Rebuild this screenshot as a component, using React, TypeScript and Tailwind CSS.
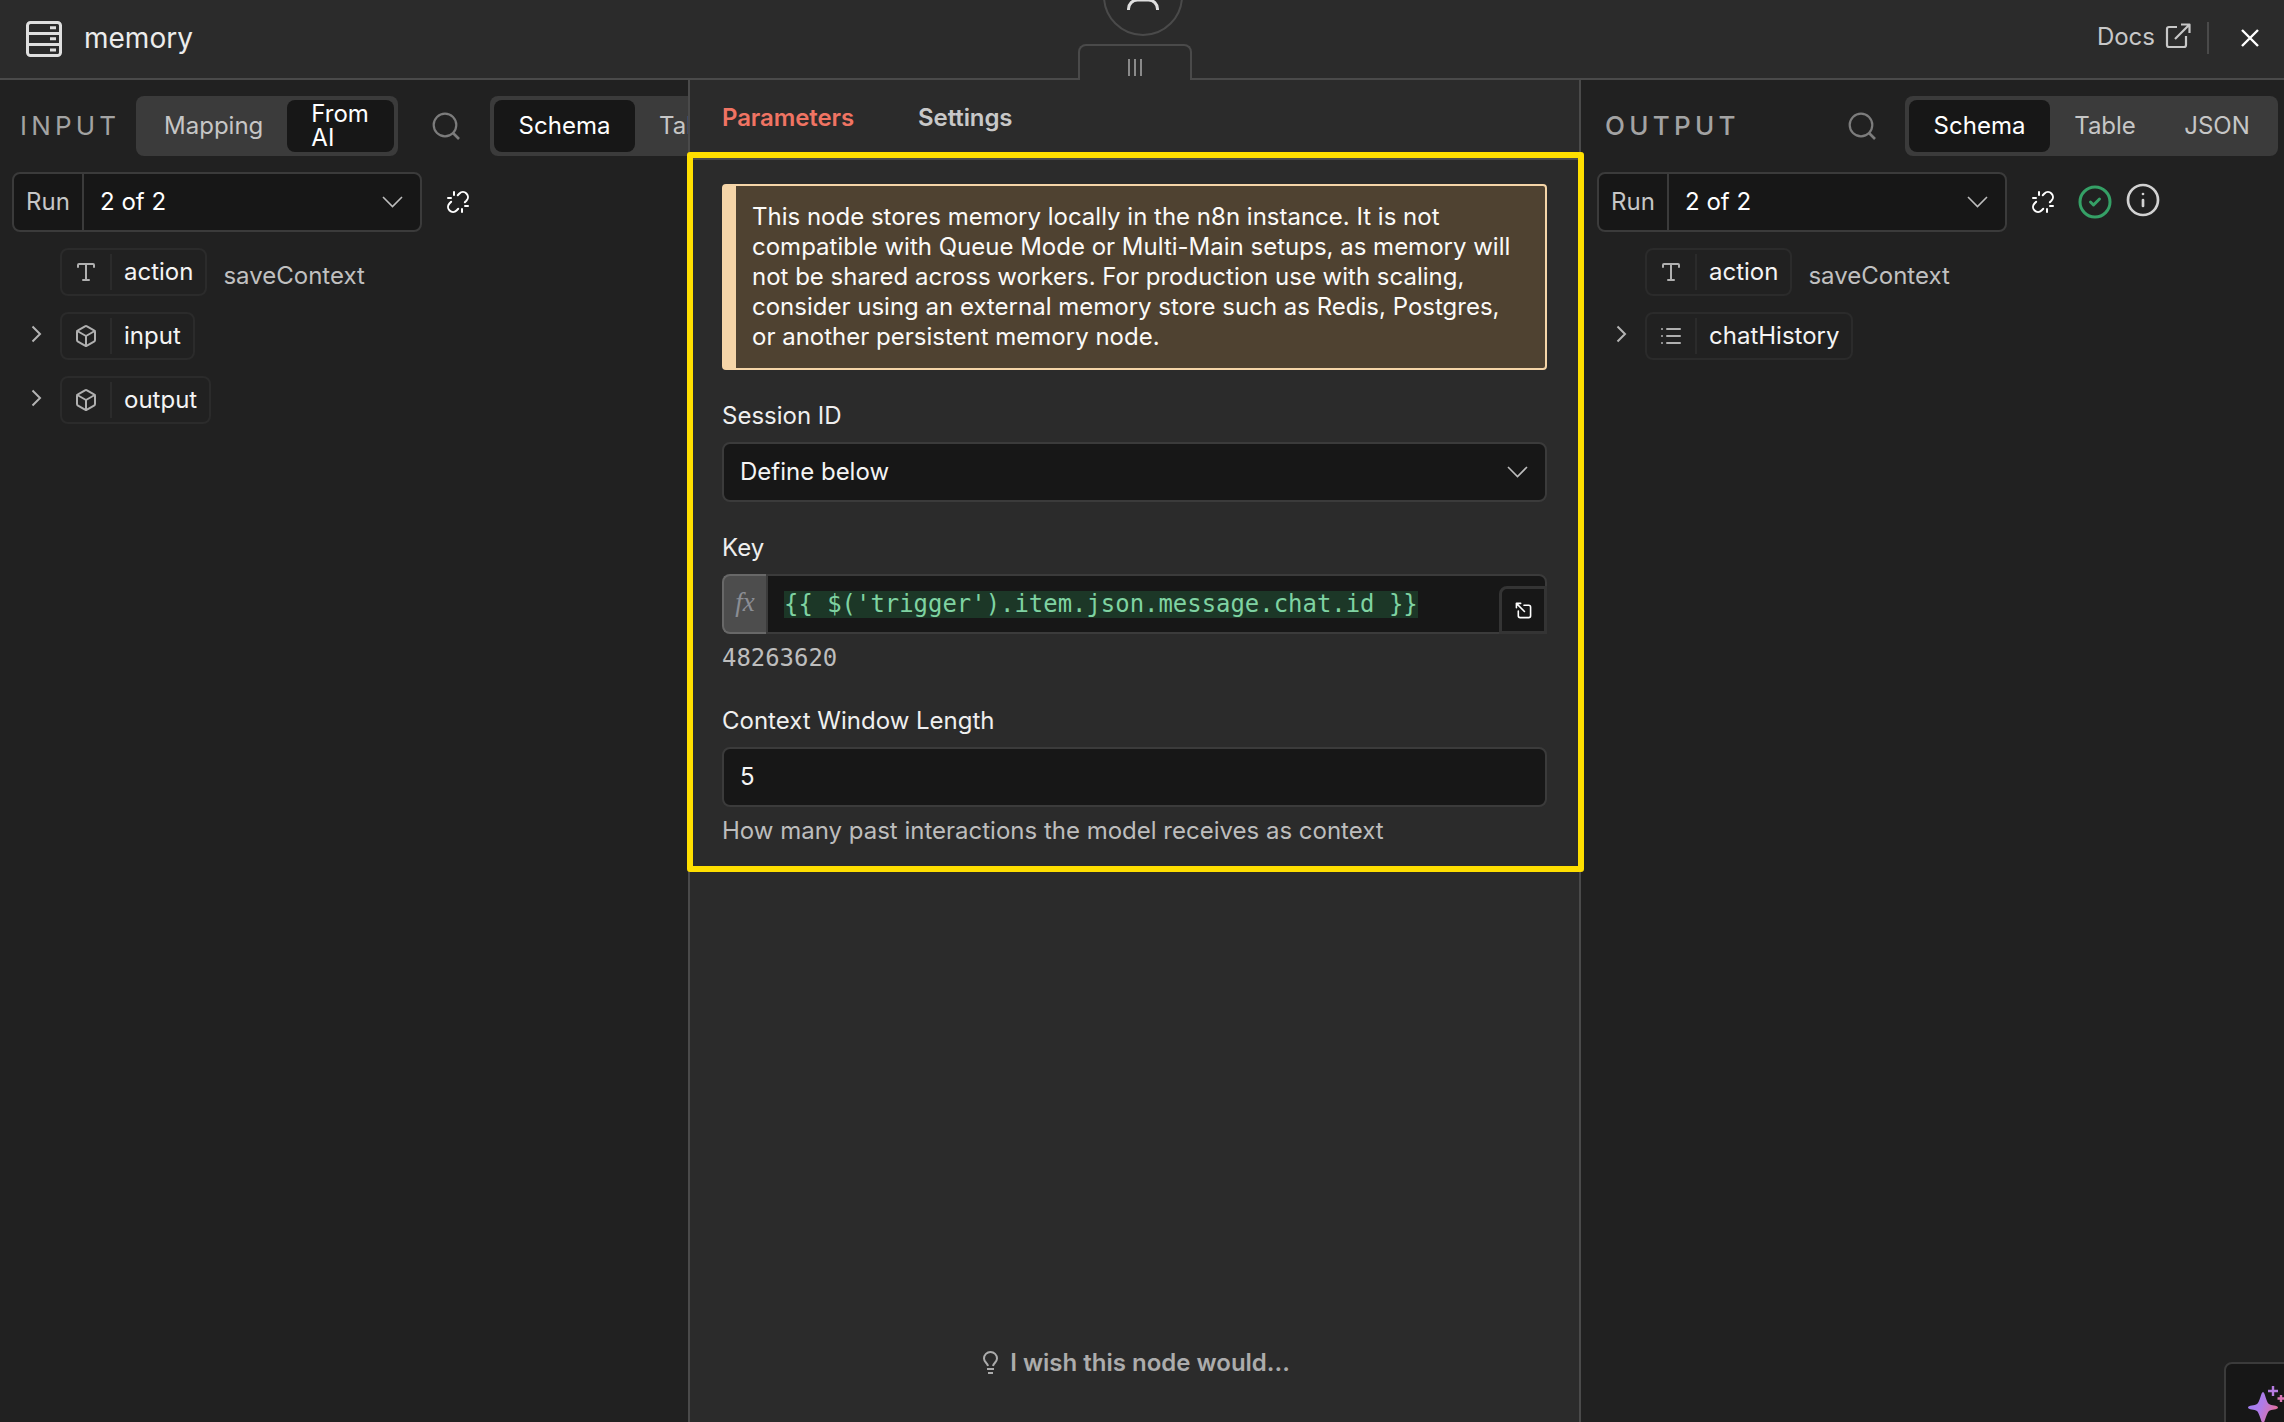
import React from "react";
import { Unlink, Box, Type, List, Info, CircleCheck } from "lucide-react";

const INTER = "font-['Inter',sans-serif]";

function ServerIcon() {
  return (
    <svg width="36" height="36" viewBox="0 0 36 36" fill="none" stroke="#dfdfdf" strokeWidth="3">
      <rect x="1.5" y="1.5" width="33" height="33" rx="3" />
      <path d="M1.5 12.5H34.5M1.5 23.5H34.5" />
      <path d="M24 6.8H30M24 17.8H30M24 29H30" />
    </svg>
  );
}

function SearchIcon() {
  return (
    <svg className="shrink-0" width="28" height="28" viewBox="0 0 28 28" fill="none" stroke="#7c7c7c" strokeWidth="2.2">
      <circle cx="13" cy="13" r="11.3" />
      <path d="M20.500 20.500L27 27" strokeWidth="2.6" />
    </svg>
  );
}

function Chevron() {
  return (
    <svg width="21" height="12" viewBox="0 0 21 12" fill="none" stroke="#bdbdbd" strokeWidth="1.6">
      <path d="M1 1L10.5 10.5L20 1" />
    </svg>
  );
}

function RunBar({ status }: { status?: boolean }) {
  return (
    <div className="flex h-[60px] items-center">
      <div className="flex h-[60px] w-[410px] items-center rounded-lg border-2 border-[#3b3b3b] bg-[#171717]">
        <div className="flex h-full w-[70px] items-center border-r-2 border-[#3b3b3b] pl-3 text-[#c6c6c6]">Run</div>
        <div className="flex-1 pl-4 text-white">2 of 2</div>
        <div className="mr-[17px]">
          <Chevron />
        </div>
      </div>
      <Unlink className="ml-6 text-white" size={24} strokeWidth={2} />
      {status && (
        <>
          <CircleCheck className="ml-[22px] text-[#35a066]" size={36} strokeWidth={2} />
          <Info className="ml-3 -mt-1 text-[#d2d2d2]" size={36} strokeWidth={1.8} />
        </>
      )}
    </div>
  );
}

function Row({ icon, name, value, expandable }: { icon: React.ReactNode; name: string; value?: string; expandable?: boolean }) {
  return (
    <div className="flex h-12 items-center">
      <div className="flex w-12 pl-[19px]">
        {expandable && (
          <svg className="-mt-1" width="11" height="18" viewBox="0 0 11 18" fill="none" stroke="#b4b4b4" strokeWidth="2">
            <path d="M1.500 1.500L9 9L1.500 16.500" />
          </svg>
        )}
      </div>
      <div className="flex h-12 items-center rounded-lg border-2 border-[#2b2b2b]">
        <div className="flex h-9 w-[50px] items-center justify-center border-r-2 border-[#2b2b2b] text-[#b0b0b0]">{icon}</div>
        <div className="px-3 text-[#f4f4f4]">{name}</div>
      </div>
      {value && <div className="ml-4 pt-2 text-[#c0c0c0]">{value}</div>}
    </div>
  );
}

function Field({ label, children, className }: { label: string; children: React.ReactNode; className: string }) {
  return (
    <div className={className}>
      <div className="h-[41px] leading-[30px] text-[#efefef]">{label}</div>
      {children}
    </div>
  );
}

export default function App() {
  return (
    <div className={`relative flex h-[1422px] w-[2284px] flex-col overflow-hidden bg-[#212121] text-[24px] leading-[30px] ${INTER}`}>
      <header className="flex h-20 shrink-0 items-center border-b-2 border-[#4a4a4a] bg-[#2b2b2b] pl-[26px] pr-[25px]">
        <ServerIcon />
        <span className="ml-[22px] pb-0.5 text-[28px] text-[#ececec]">memory</span>
        <div className="ml-auto flex items-center pb-0.5 text-[#c8c8c8]">
          <span className="pb-0.5">Docs</span>
          <svg className="ml-2.5 -mt-1" width="26" height="26" viewBox="0 0 26 26" fill="none" stroke="currentColor" strokeWidth="2.2" strokeLinejoin="round">
            <path d="M12 4H4a2 2 0 0 0-2 2V22a2 2 0 0 0 2 2H19a2 2 0 0 0 2-2V13M16 1.5H24.5V10M24.5 1.5L10 16" />
          </svg>
          <div className="ml-4 h-8 w-0.5 bg-[#4a4a4a]" />
          <svg className="ml-8" width="18" height="18" viewBox="0 0 18 18" stroke="#fff" strokeWidth="2.4">
            <path d="M1 1L17 17M17 1L1 17" />
          </svg>
        </div>
      </header>

      <main className="flex min-h-0 flex-1">
        <section className="w-[688px] overflow-hidden pl-3 pt-4">
          <div className="flex h-[60px] items-center">
            <div className="w-[124px] shrink-0 pl-2 text-[26px] tracking-[4.200px] text-[#a3a3a3]">INPUT</div>
            <div className="flex h-[60px] w-[262px] shrink-0 items-center rounded-lg bg-[#3b3b3b] p-1">
              <div className="w-[148px] text-center text-[#c6c6c6]">Mapping</div>
              <div className="flex h-[52px] w-[107px] items-center rounded-lg bg-[#171717] pl-6 leading-6 text-white">From<br />AI</div>
            </div>
            <div className="mr-[30px] ml-[34px]">
              <SearchIcon />
            </div>
            <div className="flex h-[60px] w-[373px] shrink-0 items-center rounded-lg bg-[#3b3b3b] p-1">
              <div className="flex h-[52px] w-[141px] items-center justify-center rounded-lg bg-[#171717] text-white">Schema</div>
              <div className="pl-6 text-[#c6c6c6]">Table</div>
            </div>
          </div>
          <div className="mt-4">
            <RunBar />
          </div>
          <div className="mt-4 flex flex-col gap-4">
            <Row icon={<Type size={24} strokeWidth={2} />} name="action" value="saveContext" />
            <Row icon={<Box size={24} strokeWidth={2} />} name="input" expandable />
            <Row icon={<Box size={24} strokeWidth={2} />} name="output" expandable />
          </div>
        </section>

        <section className="flex w-[893px] shrink-0 flex-col border-x-2 border-[#4a4a4a] bg-[#2b2b2b]">
          <nav className="flex h-20 shrink-0 gap-[64px] border-b-2 border-[#4a4a4a] pl-8 pt-[23px] font-semibold tracking-[-0.1px]">
            <span className="text-[#f07463]">Parameters</span>
            <span className="text-[#c8c8c8]">Settings</span>
          </nav>
          <div className="flex flex-col px-8 pt-6">
            <div className="h-[186px] rounded-[4px] border-2 border-l-[14px] border-[#f5d5a8] bg-[#4f4231] pl-4 pt-4 text-[#fbfaf8]">
              This node stores memory locally in the n8n instance. It is not<br />
              compatible with Queue Mode or Multi-Main setups, as memory will<br />
              not be shared across workers. For production use with scaling,<br />
              consider using an external memory store such as Redis, Postgres,<br />
              or another persistent memory node.
            </div>
            <Field label="Session ID" className="mt-[31px]">
              <div className="flex h-[60px] items-center justify-between rounded-lg border-2 border-[#3b3b3b] bg-[#171717] pl-4 pr-[17px] text-[#f4f4f4]">
                Define below
                <Chevron />
              </div>
            </Field>
            <Field label="Key" className="mt-[31px]">
              <div className="flex h-[60px]">
                <div className="flex w-11 items-center justify-center rounded-l-lg border-2 border-r-0 border-[#686868] bg-[#4d4d4d] pb-1 font-['Liberation_Serif',serif] text-[27px] italic text-[#8b8d94]">fx</div>
                <div className="relative flex flex-1 items-center rounded-tr-lg border-2 border-[#3b3b3b] bg-[#171717] pl-4">
                  <span className="bg-[#1c3727] font-['DejaVu_Sans_Mono',monospace] text-[23.93px] leading-[27px] whitespace-pre text-[#7fd3a2]">{"{{ $('trigger').item.json.message.chat.id }}"}</span>
                  <div className="absolute -right-0.5 -bottom-0.5 flex h-12 w-12 items-center justify-center rounded-tl-lg border-[3px] border-[#343434] bg-[#171717]">
                    <svg width="17" height="17" viewBox="0 0 18 18" fill="none" stroke="#fff" strokeWidth="1.7" strokeLinecap="round" strokeLinejoin="round">
                      <path d="M1.5 6V1.5H6M1.5 1.5L10 10M9.5 3.5H14.5a2 2 0 0 1 2 2V14.5a2 2 0 0 1-2 2H5.5a2 2 0 0 1-2-2V9.5" />
                    </svg>
                  </div>
                </div>
              </div>
            </Field>
            <div className="mt-[9px] font-['DejaVu_Sans_Mono',monospace] text-[23.93px] leading-[30px] text-[#bdbdbd]">48263620</div>
            <Field label="Context Window Length" className="mt-[33px]">
              <div className="flex h-[60px] items-center rounded-lg border-2 border-[#3b3b3b] bg-[#171717] pl-4 text-[#f4f4f4]">5</div>
            </Field>
            <div className="mt-[9px] text-[#bdbdbd]">How many past interactions the model receives as context</div>
          </div>
          <div className="mt-auto mb-11 flex items-center justify-center gap-2.5 pl-[3px] font-semibold text-[#acacac]">
            <svg width="18" height="24" viewBox="0 0 18 24" fill="none" stroke="currentColor" strokeWidth="2">
              <path d="M6 15C5.5 12 2 11 2 7.5a6.5 6.5 0 0 1 13 0C15 11 11.500 12 11 15M5 18H12M6 22H11" />
            </svg>
            I wish this node would...
          </div>
        </section>

        <section className="min-w-0 flex-1 pl-4 pt-4">
          <div className="flex h-[60px] items-center">
            <div className="pl-2 text-[26px] font-medium tracking-[4.300px] text-[#a3a3a3]">OUTPUT</div>
            <div className="mr-[29px] ml-auto">
              <SearchIcon />
            </div>
            <div className="mr-1.5 flex h-[60px] w-[373px] items-center rounded-lg bg-[#3b3b3b] p-1 text-[#c6c6c6]">
              <div className="flex h-[52px] w-[141px] items-center justify-center rounded-lg bg-[#171717] text-white">Schema</div>
              <div className="w-[110px] text-center">Table</div>
              <div className="w-[114px] text-center">JSON</div>
            </div>
          </div>
          <div className="mt-4">
            <RunBar status />
          </div>
          <div className="mt-4 flex flex-col gap-4">
            <Row icon={<Type size={24} strokeWidth={2} />} name="action" value="saveContext" />
            <Row icon={<List size={24} strokeWidth={2} />} name="chatHistory" expandable />
          </div>
        </section>
      </main>

      {/* parent node bubble */}
      <div className="absolute top-[-44px] left-[1103px] flex h-20 w-20 items-end justify-center rounded-full border-2 border-[#4a4a4a] bg-[#2b2b2b]">
        <svg className="mb-[24px]" width="32" height="12" viewBox="0 0 32 12" fill="none" stroke="#dfdfdf" strokeWidth="3">
          <path d="M1.5 12V11a9 9 0 0 1 9-9H21.500a9 9 0 0 1 9 9V12" />
        </svg>
      </div>
      {/* drag handle */}
      <div className="absolute top-11 left-[1078px] flex h-9 w-[114px] justify-center gap-1 rounded-t-lg border-2 border-b-0 border-[#4a4a4a] bg-[#2b2b2b] pt-[13px]">
        <i className="h-[17px] w-0.5 bg-[#8a8a8a]" />
        <i className="h-[17px] w-0.5 bg-[#8a8a8a]" />
        <i className="h-[17px] w-0.5 bg-[#8a8a8a]" />
      </div>
      {/* highlight frame */}
      <div className="absolute top-[152px] left-[687px] h-[720px] w-[897px] rounded-[3px] border-[6px] border-[#ffdf00]" />
      {/* assistant button */}
      <div className="absolute top-[1362px] left-[2224px] h-20 w-20 rounded-lg border-2 border-[#3b3b3b] bg-[#171717]">
        <svg className="mt-[18px] ml-[21px]" width="40" height="42" viewBox="0 0 40 42">
          <defs>
            <linearGradient id="spark" x1="0" y1="0" x2="1" y2="0.4">
              <stop offset="0" stopColor="#9a80f5" />
              <stop offset="0.55" stopColor="#b07be8" />
              <stop offset="1" stopColor="#e070a0" />
            </linearGradient>
          </defs>
          <path d="M16 10C18 10 19 20 22 22C24 24 31 23 31 25.500C31 28 24 27 22 29C19 32 18 41 16 41C14 41 13 32 10 29C8 27 1 28 1 25.500C1 23 8 24 10 22C13 20 14 10 16 10Z" fill="url(#spark)" />
          <path d="M26 4V14M21 9H31" stroke="#b57be0" strokeWidth="2.4" />
          <path d="M34 13V20M30.500 16.500H37.500" stroke="#d877b4" strokeWidth="2.4" />
        </svg>
      </div>
    </div>
  );
}
